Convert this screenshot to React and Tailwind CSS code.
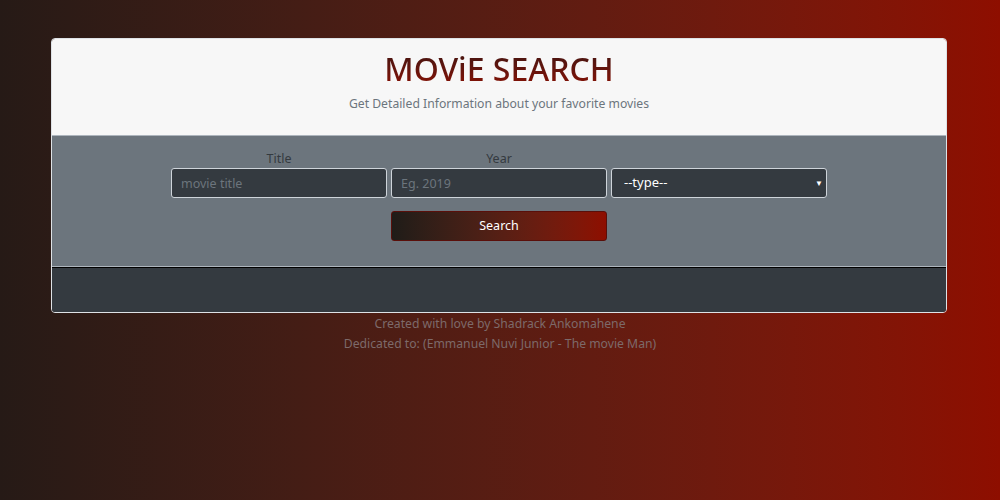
import React, { useState } from 'react';

const App = () => {
  const [title, setTitle] = useState('');
  const [year, setYear] = useState('');
  const [type, setType] = useState('');

  return (
    <div className="min-h-[500px] w-full bg-gradient-to-r from-[#261a16] to-[#8e0e00] pt-[38px] font-['Noto_Sans',sans-serif]">
      <div className="ml-[51px] w-[896px] overflow-hidden rounded-[4px] border border-[#dee2e6]">
        <div className="flex h-[96px] flex-col items-center bg-[#f7f7f7] pt-[10px]">
          <h1 className="bg-gradient-to-b from-[#3d1310] to-[#8e0e00] bg-clip-text text-[32px] leading-[40px] font-medium text-transparent">
            MOViE SEARCH
          </h1>
          <p className="mt-[6px] text-[12.2px] leading-[18px] text-[#6c757d]">
            Get Detailed Information about your favorite movies
          </p>
        </div>

        <div className="flex h-[132px] flex-col items-center border-t border-b border-[#adb5bd] bg-[#6c757d] pt-[14px]">
          <div className="grid w-[656px] grid-cols-3 gap-x-[4px]">
            <label className="text-center text-[12.5px] leading-[18px] text-[#343a40]">Title</label>
            <label className="text-center text-[12.5px] leading-[18px] text-[#343a40]">Year</label>
            <div />
            <input
              value={title}
              onChange={(e) => setTitle(e.target.value)}
              placeholder="movie title"
              className="h-[30px] rounded-[3px] border border-[#ced4da] bg-[#343a40] px-[9px] text-[12.5px] text-white outline-none placeholder:text-[#6c757d]"
            />
            <input
              value={year}
              onChange={(e) => setYear(e.target.value)}
              placeholder="Eg. 2019"
              className="h-[30px] rounded-[3px] border border-[#ced4da] bg-[#343a40] px-[9px] text-[12.5px] text-white outline-none placeholder:text-[#6c757d]"
            />
            <div className="relative">
              <select
                value={type}
                onChange={(e) => setType(e.target.value)}
                className="h-[30px] w-full appearance-none rounded-[3px] border border-[#ced4da] bg-[#343a40] px-[12px] text-[13px] text-white outline-none"
              >
                <option value="">--type--</option>
                <option value="movie">Movie</option>
                <option value="series">Series</option>
                <option value="episode">Episode</option>
              </select>
              <span className="pointer-events-none absolute right-[4px] top-[9px] text-[8px] text-white">▼</span>
            </div>
            <div />
            <button className="mt-[13px] h-[30px] rounded-[3px] border border-[#5a0f0a] bg-gradient-to-r from-[#1f1c18] to-[#8e0e00] text-[12.5px] text-white">
              Search
            </button>
            <div />
          </div>
        </div>

        <div className="h-[45px] border-t border-black bg-[#343a40]" />
      </div>

      <div className="mt-[1px] flex flex-col items-center text-[12.2px] leading-[20px] text-[#7d6a6a]">
        <p>Created with love by Shadrack Ankomahene</p>
        <p>Dedicated to: (Emmanuel Nuvi Junior - The movie Man)</p>
      </div>
    </div>
  );
};

export default App;
